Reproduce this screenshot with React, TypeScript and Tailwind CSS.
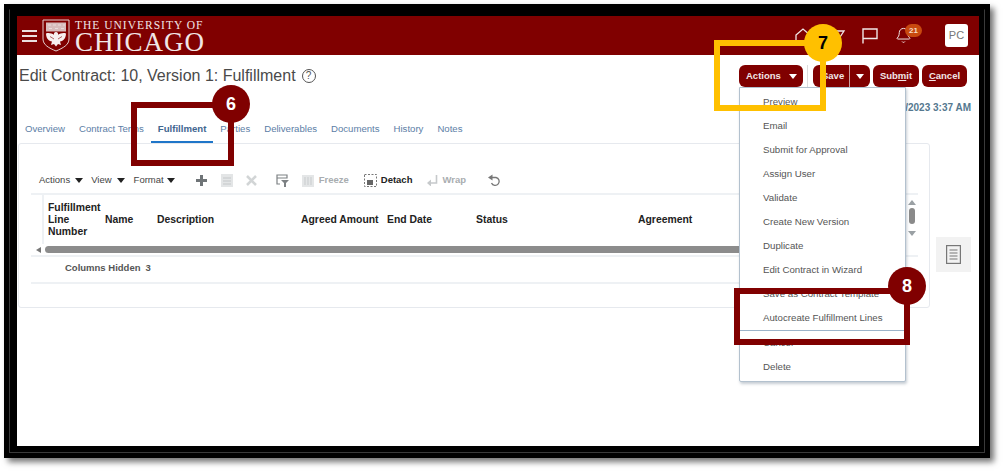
import { Bell } from "lucide-react";

const tabs = ["Overview", "Contract Terms", "Fulfillment", "Parties", "Deliverables", "Documents", "History", "Notes"];
const menu = [
  "Preview",
  "Email",
  "Submit for Approval",
  "Assign User",
  "Validate",
  "Create New Version",
  "Duplicate",
  "Edit Contract in Wizard",
  "Save as Contract Template",
  "Autocreate Fulfillment Lines",
];
const columns = [
  { label: "Name", w: "w-[52px]" },
  { label: "Description", w: "w-[144px]" },
  { label: "Agreed Amount", w: "w-[86px]" },
  { label: "End Date", w: "w-[89px]" },
  { label: "Status", w: "w-[162px]" },
  { label: "Agreement", w: "w-[80px]" },
];

function Crest() {
  return (
    <svg width="28" height="33" viewBox="0 0 28 33" className="shrink-0">
      <path d="M1 1h26v19c0 6-6 9-13 12C7 29 1 26 1 20z" fill="#800000" stroke="#e3cfcf" strokeWidth="1" />
      <rect x="4" y="3.500" width="20" height="9" fill="#d8bcbc" />
      <path d="M6 6h3M11 6h3M16 6h3M21 6h2M7 9.500h3M13 9.500h3M19 9.500h3" stroke="#e9dcdc" strokeWidth="1.200" />
      <path d="M14 13c1.800 0 2.300 1.500 2 2.800 2.200-1.200 5-2.300 8-1.300 0 4.500-2.500 7.500-6 8l1 3.500-3-1-2 2.500-2-2.500-3 1 1-3.500c-3.500-.5-6-3.500-6-8 3-1 5.800.1 8 1.300-.3-1.300.2-2.800 2-2.800z" fill="#f7efef" />
      <path d="M8 17.500l4 2.500M20 17.500l-4 2.500" stroke="#a04040" strokeWidth="0.800" />
    </svg>
  );
}

function Caret({ className }: { className: string }) {
  return (
    <svg width="8" height="5" viewBox="0 0 8 5" className={className}>
      <path d="M0 0h8L4 5z" fill="currentColor" />
    </svg>
  );
}

function Badge({ n, className, color }: { n: string; className: string; color: string }) {
  return (
    <div className={`absolute w-[38px] h-[38px] rounded-full flex items-center justify-center font-bold text-[18px] ${color} ${className}`}>
      {n}
    </div>
  );
}

export default function App() {
  return (
    <div className="w-[1004px] h-[471px] bg-white pt-[4px] pl-[4px] font-['Liberation_Sans',Arial,sans-serif] overflow-hidden">
      <div className="w-[986px] h-[454px] bg-black p-[5px] shadow-[4px_4px_6px_rgba(0,0,0,0.55)]">
        <div className="w-[976px] h-[444px] border border-[#3a3a3a] border-t-black pl-[7px] pt-[6px]">
          <div className="relative w-[962px] h-[430px] bg-white overflow-hidden">
            <header className="h-[39px] bg-[#800000] flex items-center pl-[5px] pr-[11px] text-white">
              <div className="flex flex-col gap-[3px] w-[15px] mr-[5px]">
                <span className="h-[2px] bg-[#eadede]" />
                <span className="h-[2px] bg-[#eadede]" />
                <span className="h-[2px] bg-[#eadede]" />
              </div>
              <Crest />
              <div className="ml-[5px] font-['Liberation_Serif',serif] text-[#f1e6e6] leading-none">
                <div className="text-[11.500px] tracking-[1px] h-[9px]">THE UNIVERSITY OF</div>
                <div className="text-[27px] tracking-[1px] h-[23px]">CHICAGO</div>
              </div>
              <div className="ml-auto flex items-center">
                <svg width="18" height="18" viewBox="0 0 18 18" fill="none" stroke="#f0e6e6" strokeWidth="1.300">
                  <path d="M2 8l7-6 7 6v8H2z" />
                </svg>
                <svg width="16" height="16" viewBox="0 0 16 16" fill="none" stroke="#f0e6e6" strokeWidth="1.300" className="ml-[18px]">
                  <path d="M2 3h12l-6 9z" />
                </svg>
                <svg width="17" height="17" viewBox="0 0 17 17" fill="none" stroke="#f0e6e6" strokeWidth="1.400" className="ml-[15px]">
                  <path d="M2 16.500V2h14v9.500H2" />
                </svg>
                <div className="relative ml-[17px] mr-[33px]">
                  <Bell size={17} strokeWidth={1.400} className="text-[#f0e6e6]" />
                  <span className="absolute -top-[3px] left-[10px] w-[17px] h-[13px] rounded-full bg-[#c8490f] text-[8px] font-bold leading-[13px] text-center text-[#f6dcc8]">
                    21
                  </span>
                </div>
                <div className="w-[23px] h-[23px] rounded-[3px] bg-white text-[#777] text-[11px] flex items-center justify-center">PC</div>
              </div>
            </header>

            <div className="mt-[10px] h-[22px] flex items-center justify-between pl-[2px] pr-[12px]">
              <div className="flex items-center text-[16px] text-[#4a4a4a] whitespace-nowrap">
                Edit Contract: 10, Version 1: Fulfillment
                <span className="ml-[6px] w-[14px] h-[14px] rounded-full border border-[#555] text-[10px] text-[#555] leading-[12px] text-center">?</span>
              </div>
              <div className="flex items-center text-[9.500px] font-bold text-[#f2e6e6]">
                <div className="w-[64px] h-[22px] rounded-[6px] bg-[#800000] flex items-center pl-[7px]">
                  Actions
                  <Caret className="ml-[8px] text-white" />
                </div>
                <span className="w-px h-[22px] bg-[#dcdcdc] mx-[4px]" />
                <div className="w-[57px] h-[22px] rounded-[6px] bg-[#800000] flex items-center pl-[9px] ml-[1px]">
                  Save
                  <span className="w-px h-[22px] bg-[#c9a0a0] ml-[5px]" />
                  <Caret className="ml-[6px] text-white" />
                </div>
                <div className="w-[46px] h-[22px] rounded-[6px] bg-[#800000] flex items-center justify-center ml-[3px]">
                  <span>Sub<u>m</u>it</span>
                </div>
                <div className="w-[45px] h-[22px] rounded-[6px] bg-[#800000] flex items-center justify-center ml-[3px]">
                  <span><u>C</u>ancel</span>
                </div>
              </div>
            </div>

            <div className="mt-[13px] h-[14px] pr-[8px] flex items-center justify-end text-[10px] font-bold text-[#55788f]">
              1/16/2023 3:37 AM
            </div>

            <nav className="mt-[3px] h-[26px] pl-[1px] flex text-[9.600px] text-[#5c7ea6]">
              {tabs.map((t) => (
                <div
                  key={t}
                  className={
                    t === "Fulfillment"
                      ? "px-[7px] pt-[5px] whitespace-nowrap border-b-2 border-[#1f76c9] font-bold text-[#3f6690]"
                      : "px-[7px] pt-[5px] whitespace-nowrap border-b-2 border-transparent"
                  }
                >
                  {t}
                </div>
              ))}
            </nav>

            <div className="flex items-start pl-[1px]">
              <section className="relative w-[912px] h-[165px] border border-[#e6e9ee] rounded-[3px]">
                <div className="h-[51px] pt-[24px] ml-[12px] mr-[11px] border-b-2 border-[#eef1f4] flex items-center text-[9.500px] text-[#444]">
                  <span className="ml-[8px]">Actions</span>
                  <Caret className="ml-[5px] text-[#222]" />
                  <span className="ml-[8px]">View</span>
                  <Caret className="ml-[5px] text-[#222]" />
                  <span className="ml-[9px]">Format</span>
                  <Caret className="ml-[3px] text-[#222]" />
                  <svg width="11" height="11" viewBox="0 0 11 11" className="ml-[21px]">
                    <path d="M4 0h3v4h4v3H7v4H4V7H0V4h4z" fill="#6f7477" />
                  </svg>
                  <svg width="12" height="13" viewBox="0 0 12 13" className="ml-[14px]">
                    <rect width="12" height="13" fill="#e3e5e6" />
                    <path d="M2 4h8M2 7h8M2 10h8" stroke="#c4c7c9" />
                  </svg>
                  <svg width="11" height="11" viewBox="0 0 11 11" className="ml-[13px]">
                    <path d="M1 1l9 9M10 1l-9 9" stroke="#d2d5d6" strokeWidth="2.500" />
                  </svg>
                  <svg width="13" height="13" viewBox="0 0 13 13" className="ml-[19px]" fill="none">
                    <path d="M1 1h10v3H1zM1 4v6h3" stroke="#7d8184" strokeWidth="1.200" />
                    <path d="M5 6h8l-3 3v4H8V9z" fill="#7d8184" />
                  </svg>
                  <svg width="12" height="12" viewBox="0 0 12 12" className="ml-[13px]">
                    <rect width="12" height="12" fill="#e4e6e7" />
                    <path d="M3 2v8M6 2v8M9 2v8" stroke="#c8cbcd" />
                  </svg>
                  <span className="ml-[5px] font-bold text-[#a9adb0]">Freeze</span>
                  <svg width="13" height="13" viewBox="0 0 13 13" className="ml-[15px]" fill="none">
                    <rect x="0.500" y="0.500" width="12" height="12" stroke="#777" strokeDasharray="2 1.500" />
                    <rect x="3" y="6" width="6" height="5" fill="#666" />
                  </svg>
                  <span className="ml-[4px] font-bold text-[#222]">Detach</span>
                  <svg width="11" height="11" viewBox="0 0 11 11" className="ml-[15px]" fill="none">
                    <path d="M9.500 0v8H3" stroke="#c6c9cb" strokeWidth="1.600" />
                    <path d="M4 4.500v7L0 8z" fill="#c6c9cb" />
                  </svg>
                  <span className="ml-[4px] font-bold text-[#a9adb0]">Wrap</span>
                  <svg width="13" height="13" viewBox="0 0 13 13" className="ml-[22px]" fill="none">
                    <path d="M3 3.500h5a4 4 0 1 1-4.500 5.500" stroke="#777" strokeWidth="1.300" />
                    <path d="M4.500 0.500v6L0 3.500z" fill="#777" />
                  </svg>
                </div>

                <div className="ml-[12px] mr-[11px] h-[49px] flex items-center text-[10.400px] font-bold text-[#222] leading-[12px]">
                  <div className="w-[13px] h-full border-r-2 border-[#eef1f4]" />
                  <div className="w-[61px] pl-[4px]">
                    Fulfillment
                    <br />
                    Line
                    <br />
                    Number
                  </div>
                  {columns.map((c) => (
                    <div key={c.label} className={`${c.w} whitespace-nowrap`}>
                      {c.label}
                    </div>
                  ))}
                </div>

                <div className="ml-[12px] mr-[11px] h-[13px] flex items-center border-b-2 border-[#eef1f4]">
                  <svg width="5" height="6" viewBox="0 0 5 6" className="ml-[5px]">
                    <path d="M5 0v6L0 3z" fill="#777" />
                  </svg>
                  <div className="ml-[4px] w-[760px] h-[7px] rounded-full bg-[#8c8c8c]" />
                </div>

                <div className="ml-[12px] mr-[11px] h-[27px] flex items-center border-b-2 border-[#eef1f4] pl-[34px] pb-[2px] text-[9.500px] font-bold text-[#555]">
                  Columns Hidden
                  <span className="ml-[5px]">3</span>
                </div>

                <div className="absolute left-[889px] top-[56px] flex flex-col items-center">
                  <Caret className="rotate-180 text-[#9aa0a4]" />
                  <div className="mt-[3px] w-[6px] h-[16px] rounded-full bg-[#8a8a8a]" />
                  <Caret className="mt-[7px] text-[#9aa0a4]" />
                </div>
              </section>

              <div className="ml-[6px] mt-[94px] w-[35px] h-[35px] bg-[#f2f2f2] flex items-center justify-center">
                <svg width="15" height="19" viewBox="0 0 15 19" fill="none" stroke="#777" strokeWidth="1.200">
                  <rect x="0.600" y="0.600" width="13.800" height="17.800" />
                  <path d="M3.500 5h8M3.500 8h8M3.500 11h8M3.500 14h8" />
                </svg>
              </div>
            </div>

            <div className="absolute left-[722px] top-[71px] w-[167px] h-[295px] bg-white border border-[#b3c1ce] rounded-b-[2px] shadow-[1px_2px_3px_rgba(90,110,130,0.35)] pt-[2px] text-[9.700px] text-[#555]">
              {menu.map((m) => (
                <div key={m} className="h-[24px] pl-[23px] flex items-center whitespace-nowrap">
                  {m}
                </div>
              ))}
              <div className="h-px bg-[#9db4ca]" />
              <div className="h-[24px] pl-[23px] flex items-center">Cancel</div>
              <div className="h-[24px] pl-[23px] flex items-center">Delete</div>
            </div>

            <div className="absolute left-[114px] top-[86px] w-[103px] h-[64px] border-[6px] border-[#800000]" />
            <div className="absolute left-[697px] top-[24px] w-[112px] h-[71px] border-[6px] border-[#ffc000]" />
            <div className="absolute left-[717px] top-[272px] w-[176px] h-[57px] border-[6px] border-[#800000]" />
            <Badge n="6" className="left-[195px] top-[69px]" color="bg-[#800000] text-white" />
            <Badge n="7" className="left-[787px] top-[8px]" color="bg-[#ffc000] text-black" />
            <Badge n="8" className="left-[871px] top-[251px]" color="bg-[#800000] text-white" />
          </div>
        </div>
      </div>
    </div>
  );
}
